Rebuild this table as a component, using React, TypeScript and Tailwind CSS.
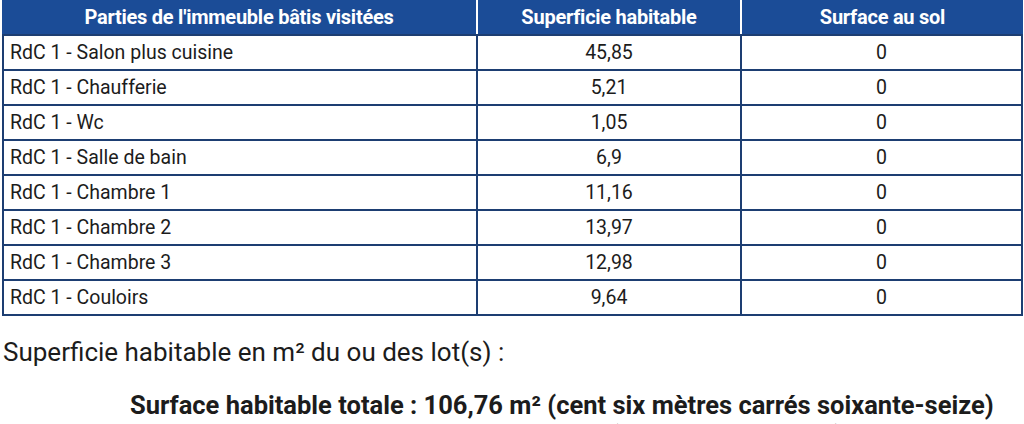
import React from "react";

const rows: [string, string, string][] = [
  ["RdC 1 - Salon plus cuisine", "45,85", "0"],
  ["RdC 1 - Chaufferie", "5,21", "0"],
  ["RdC 1 - Wc", "1,05", "0"],
  ["RdC 1 - Salle de bain", "6,9", "0"],
  ["RdC 1 - Chambre 1", "11,16", "0"],
  ["RdC 1 - Chambre 2", "13,97", "0"],
  ["RdC 1 - Chambre 3", "12,98", "0"],
  ["RdC 1 - Couloirs", "9,64", "0"],
];

export default function App() {
  return (
    <div
      className="w-[1024px] h-[424px] overflow-hidden bg-white text-[#1c1c1c]"
      style={{ fontFamily: "Roboto, 'Noto Sans', sans-serif" }}
    >
      <div className="ml-[2px] w-[1021px]">
        <div className="grid grid-cols-[474px_264px_1fr] h-[34px] bg-[#1b4c97] text-white font-bold text-[20px] tracking-[-0.25px]">
          <div className="flex items-center justify-center">Parties de l'immeuble bâtis visitées</div>
          <div className="flex items-center justify-center border-l-2 border-white">Superficie habitable</div>
          <div className="flex items-center justify-center border-l-2 border-white">Surface au sol</div>
        </div>
        <div className="border-x-2 border-b-2 border-[#1d3e72]">
          {rows.map((r, i) => (
            <div
              key={i}
              className="grid grid-cols-[472px_264px_1fr] h-[35px] text-[19.5px] border-t-2 border-[#1d3e72]"
            >
              <div className="flex items-center pl-[6px]">{r[0]}</div>
              <div className="flex items-center justify-center border-l-2 border-[#1d3e72]">{r[1]}</div>
              <div className="flex items-center justify-center border-l-2 border-[#1d3e72]">{r[2]}</div>
            </div>
          ))}
        </div>
      </div>
      <div className="mt-[21px] pl-[3px] text-[26px] leading-[30px]">
        Superficie habitable en m² du ou des lot(s) :
      </div>
      <div className="mt-[23px] pl-[130px] text-[25.5px] leading-[30px] font-bold whitespace-nowrap">
        Surface habitable totale : 106,76 m² (cent six mètres carrés soixante-seize)
      </div>
      <div className="mt-0 pl-[610px] text-[25.5px] leading-[30px] font-bold whitespace-nowrap">
        (zéro mètres carrés)
      </div>
    </div>
  );
}
